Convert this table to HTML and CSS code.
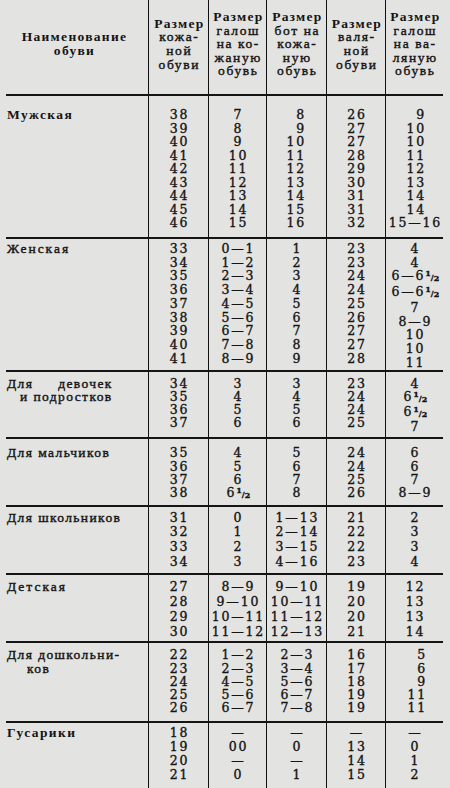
FILE: index.html
```html
<!DOCTYPE html>
<html lang="ru">
<head>
<meta charset="utf-8">
<title>Размеры обуви</title>
<link rel="stylesheet" href="styles.css">
</head>
<body>
<div class="sheet">
  <div class="group head">
    <div class="cell hname"><span>Наименование<br>обуви</span></div>
    <div class="cell hcol"><span><b>Размер</b><br>кожа-<br>ной<br>обуви</span></div>
    <div class="cell hcol"><span><b>Размер</b><br>галош<br>на ко-<br>жаную<br>обувь</span></div>
    <div class="cell hcol"><span><b>Размер</b><br>бот на<br>кожа-<br>ную<br>обувь</span></div>
    <div class="cell hcol"><span><b>Размер</b><br>валя-<br>ной<br>обуви</span></div>
    <div class="cell hcol"><span><b>Размер</b><br>галош<br>на ва-<br>ляную<br>обувь</span></div>
  </div>

  <div class="group g-men">
    <div class="cell label bold">Мужская</div>
    <div class="cell num">38<br>39<br>40<br>41<br>42<br>43<br>44<br>45<br>46</div>
    <div class="cell num">7<br>8<br>9<br>10<br>11<br>12<br>13<br>14<br>15</div>
    <div class="cell num ra4">8<br>9<br>10<br>11<br>12<br>13<br>14<br>15<br>16</div>
    <div class="cell num">26<br>27<br>27<br>28<br>29<br>30<br>31<br>31<br>32</div>
    <div class="cell num ra6">9<br>10<br>10<br>11<br>12<br>13<br>14<br>14<br><span class="over">15—16</span></div>
  </div>

  <div class="group g-wom">
    <div class="cell label spaced">Женская</div>
    <div class="cell num">33<br>34<br>35<br>36<br>37<br>38<br>39<br>40<br>41</div>
    <div class="cell num">0—1<br>1—2<br>2—3<br>3—4<br>4—5<br>5—6<br>6—7<br>7—8<br>8—9</div>
    <div class="cell num">1<br>2<br>3<br>4<br>5<br>6<br>7<br>8<br>9</div>
    <div class="cell num">23<br>23<br>24<br>24<br>25<br>26<br>27<br>27<br>28</div>
    <div class="cell num">4<br>4<br>6—6<span class="fr"><sup>1</sup>/<sub>2</sub></span><br>6—6<span class="fr"><sup>1</sup>/<sub>2</sub></span><br>7<br>8—9<br>10<br>10<br>11</div>
  </div>

  <div class="group g-girl">
    <div class="cell label"><span class="wide">Для девочек</span><br><span class="cont">и подростков</span></div>
    <div class="cell num">34<br>35<br>36<br>37</div>
    <div class="cell num">3<br>4<br>5<br>6</div>
    <div class="cell num">3<br>4<br>5<br>6</div>
    <div class="cell num">23<br>24<br>24<br>25</div>
    <div class="cell num">4<br>6<span class="fr"><sup>1</sup>/<sub>2</sub></span><br>6<span class="fr"><sup>1</sup>/<sub>2</sub></span><br>7</div>
  </div>

  <div class="group g-boy">
    <div class="cell label">Для мальчиков</div>
    <div class="cell num">35<br>36<br>37<br>38</div>
    <div class="cell num">4<br>5<br>6<br>6<span class="fr"><sup>1</sup>/<sub>2</sub></span></div>
    <div class="cell num">5<br>6<br>7<br>8</div>
    <div class="cell num">24<br>24<br>25<br>26</div>
    <div class="cell num">6<br>6<br>7<br>8—9</div>
  </div>

  <div class="group g-sch">
    <div class="cell label">Для школьников</div>
    <div class="cell num">31<br>32<br>33<br>34</div>
    <div class="cell num">0<br>1<br>2<br>3</div>
    <div class="cell num">1—13<br>2—14<br>3—15<br>4—16</div>
    <div class="cell num">21<br>22<br>22<br>23</div>
    <div class="cell num">2<br>3<br>3<br>4</div>
  </div>

  <div class="group g-kid">
    <div class="cell label spaced">Детская</div>
    <div class="cell num">27<br>28<br>29<br>30</div>
    <div class="cell num">8—9<br>9—10<br>10—11<br>11—12</div>
    <div class="cell num">9—10<br>10—11<br>11—12<br>12—13</div>
    <div class="cell num">19<br>20<br>20<br>21</div>
    <div class="cell num">12<br>13<br>13<br>14</div>
  </div>

  <div class="group g-pre">
    <div class="cell label">Для дошкольни-<br><span class="cont2">ков</span></div>
    <div class="cell num">22<br>23<br>24<br>25<br>26</div>
    <div class="cell num">1—2<br>2—3<br>4—5<br>5—6<br>6—7</div>
    <div class="cell num">2—3<br>3—4<br>5—6<br>6—7<br>7—8</div>
    <div class="cell num">16<br>17<br>18<br>19<br>19</div>
    <div class="cell num ra6b">5<br>6<br>9<br>11<br>11</div>
  </div>

  <div class="group g-hus last">
    <div class="cell label bold">Гусарики</div>
    <div class="cell num">18<br>19<br>20<br>21</div>
    <div class="cell num">—<br>00<br>—<br>0</div>
    <div class="cell num">—<br>0<br>—<br>1</div>
    <div class="cell num">—<br>13<br>14<br>15</div>
    <div class="cell num">—<br>0<br>1<br>2</div>
  </div>
</div>
</body>
</html>
```

FILE: styles.css
```css
html, body {
  margin: 0;
  padding: 0;
  background: #e3e3e1;
}

body {
  width: 450px;
  height: 788px;
  overflow: hidden;
  font-family: "Liberation Serif", "DejaVu Serif", serif;
  color: #141414;
  font-size: 13px;
}

.sheet {
  margin-left: 6px;
  width: 437px;
}

.group {
  display: grid;
  grid-template-columns: 142px 60px 58px 60px 59px 58px;
  grid-template-rows: 100%;
  box-sizing: border-box;
  border-bottom: 2px solid #151515;
  --lh: 13.5px;
  --pt: 4px;
}

.group.last {
  border-bottom: none;
}

.cell {
  box-sizing: border-box;
  line-height: var(--lh);
  padding-top: var(--pt);
  overflow: visible;
}

.cell + .cell {
  border-left: 1px solid #111111;
}

/* header */
.head {
  height: 96px;
  --lh: 13.6px;
  --pt: 0px;
}

.head .cell {
  display: flex;
  align-items: center;
  justify-content: center;
  text-align: center;
  padding-bottom: 6px;
}

.hname {
  font-size: 13.5px;
  font-weight: bold;
  letter-spacing: 1.3px;
  padding-right: 5px;
}

.hcol {
  font-size: 13.5px;
  letter-spacing: 1.6px;
  -webkit-text-stroke: 0.4px #141414;
}

.hcol span {
  padding-left: 1.6px;
}

.hcol b {
  font-weight: bold;
  letter-spacing: 1.2px;
  -webkit-text-stroke: 0;
}

/* labels */
.label {
  padding-left: 1px;
  font-size: 13.5px;
  letter-spacing: 1.4px;
  white-space: nowrap;
  -webkit-text-stroke: 0.4px #141414;
}

.label.bold {
  font-weight: bold;
  letter-spacing: 1.4px;
  -webkit-text-stroke: 0;
}

.label.spaced {
  letter-spacing: 2px;
}

.wide {
  word-spacing: 20px;
}

.cont {
  padding-left: 13px;
}

.cont2 {
  padding-left: 20px;
}

/* numbers */
.num {
  font-family: "DejaVu Serif", "Liberation Serif", serif;
  font-size: 12.5px;
  text-align: center;
  letter-spacing: 1.8px;
  padding-left: 1.8px;
  white-space: nowrap;
  -webkit-text-stroke: 0.35px #141414;
}

.ra4 {
  text-align: right;
  padding-right: 20px;
}

.ra6 {
  text-align: right;
  padding-right: 17px;
}

.ra6b {
  text-align: right;
  padding-right: 16px;
}

.over {
  margin-right: -16px;
}

.fr {
  font-size: 8px;
  letter-spacing: 0;
  font-weight: bold;
}

.fr sup,
.fr sub {
  font-size: 8px;
  line-height: 0;
  position: relative;
  vertical-align: baseline;
}

.fr sup {
  top: -4px;
}

.fr sub {
  top: 1px;
}

/* per-group vertical rhythm: fixed block heights keep the rules in place */
.g-men  { height: 143px; --lh: 13.5px; --pt: 12px; }
.g-wom  { height: 133px; --lh: 13.7px; --pt: 3px; }
.g-girl { height: 67px;  --lh: 13px;   --pt: 4.5px; }
.g-boy  { height: 68px;  --lh: 13.3px; --pt: 7.3px; }
.g-sch  { height: 68px;  --lh: 14.7px; --pt: 3.6px; }
.g-kid  { height: 68px;  --lh: 15px;   --pt: 3.5px; }
.g-pre  { height: 80px;  --lh: 13.3px; --pt: 5.3px; }
.g-hus  { height: 65px;  --lh: 14px;   --pt: 3px; }
```
